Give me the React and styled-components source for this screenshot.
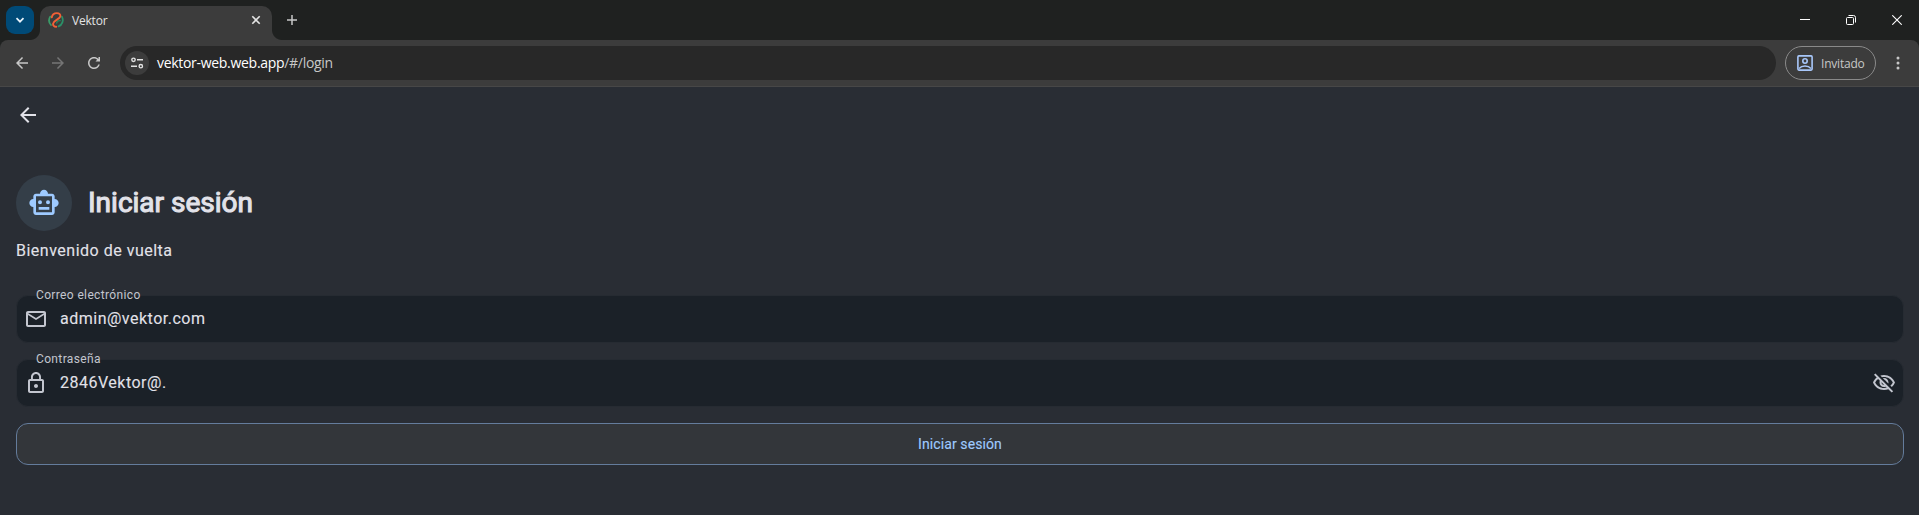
import React from "react";
import styled, { createGlobalStyle } from "styled-components";

const Global = createGlobalStyle`
  *{box-sizing:border-box}
  body{margin:0;background:#292d34;overflow:hidden}
  button{font:inherit;padding:0;border:0;background:none;color:inherit}
  svg{display:block;flex:none}
`;
const Window = styled.div`
  height:515px;display:flex;flex-direction:column;background:#292d34;
  font-family:Roboto,sans-serif;color:#e2e2e9;
`;
const TabStrip = styled.header`
  height:40px;display:flex;align-items:flex-start;padding:6px 0 0 6px;background:#1f2120;
  font-family:"Open Sans","Noto Sans",sans-serif;
`;
const TabSearch = styled.button`
  width:28px;height:28px;border-radius:9px;background:#004a77;display:grid;place-items:center;margin-right:6px;
`;
const Tab = styled.div`
  position:relative;width:232px;height:34px;border-radius:10px 10px 0 0;background:#3c3c3c;
  display:flex;align-items:center;padding:0 10px 6px 8px;color:#e3e3e3;
  &::before,&::after{content:"";position:absolute;bottom:0;width:10px;height:10px}
  &::before{left:-10px;background:radial-gradient(circle at 0 0,transparent 9.5px,#3c3c3c 10.5px)}
  &::after{right:-10px;background:radial-gradient(circle at 100% 0,transparent 9.5px,#3c3c3c 10.5px)}
`;
const TabTitle = styled.span`
  flex:1;margin-left:8px;padding-top:1px;font-size:12px;line-height:16px;letter-spacing:-0.2px;
`;
const NewTab = styled.button`
  width:28px;height:28px;margin-left:6px;display:grid;place-items:center;
`;
const WindowControls = styled.div`
  margin:0 -1px 0 auto;height:28px;display:flex;
`;
const ControlButton = styled.button`
  width:46px;height:28px;display:grid;place-items:center;
`;
const Chrome = styled.div`background:#1f2120;flex:none;`;
const Toolbar = styled.div`
  height:47px;display:flex;align-items:center;padding:6px 8px;
  background:#3c3c3c;border-bottom:1px solid #474747;
  border-radius:8px 8px 0 0;font-family:"Open Sans","Noto Sans",sans-serif;
`;
const NavButton = styled.button`
  width:28px;height:28px;margin-right:8px;display:grid;place-items:center;
`;
const AddressBar = styled.div`
  flex:1;height:34px;margin-left:4px;border-radius:17px;background:#282828;display:flex;align-items:center;padding-left:5px;
`;
const SiteInfo = styled.span`
  width:24px;height:24px;border-radius:50%;background:#3c3c3c;display:grid;place-items:center;margin-right:8px;
`;
const Url = styled.span`
  font-size:14px;line-height:20px;letter-spacing:-0.3px;color:#fff;white-space:pre;
`;
const Path = styled.span`color:#c7c7c7;`;
const Profile = styled.button`
  width:91px;height:34px;margin-left:9px;border:1px solid #8a8a8a;border-radius:17px;
  display:flex;align-items:center;padding-left:11px;gap:8px;color:#c7c7c7;font-size:12px;letter-spacing:-0.2px;
`;
const MenuButton = styled.button`
  width:28px;height:28px;margin:0 -1px 0 8px;display:grid;place-items:center;
`;
const Page = styled.main`
  flex:1;display:flex;flex-direction:column;padding:16px 15px 0 16px;
`;
const Back = styled.button`width:24px;height:24px;`;
const Heading = styled.div`
  display:flex;align-items:center;gap:16px;margin-top:48px;
`;
const Avatar = styled.div`
  width:56px;height:56px;border-radius:50%;background:#343e48;display:grid;place-items:center;
`;
const Title = styled.h1`
  margin:0;font-size:28px;line-height:36px;font-weight:400;letter-spacing:0;-webkit-text-stroke:1.1px currentColor;
`;
const Subtitle = styled.p`
  margin:8px 0 0;font-size:16px;line-height:24px;letter-spacing:0.5px;-webkit-text-stroke:0.12px currentColor;
`;
const Form = styled.form`display:flex;flex-direction:column;margin-top:32px;`;
const Field = styled.label`
  position:relative;height:48px;margin-bottom:16px;display:flex;align-items:center;
  border:1px solid #262b32;border-radius:12px;background:#1b2128;padding:0 7px;
`;
const FieldLabel = styled.span`
  position:absolute;left:19px;top:-9px;font-size:12px;line-height:16px;letter-spacing:0.36px;color:#c3c6cf;
`;
const Value = styled.span`
  flex:1;margin-left:12px;font-size:16px;line-height:24px;letter-spacing:0.5px;-webkit-text-stroke:0.1px currentColor;
`;
const Submit = styled.button`
  height:42px;border:1px solid #647c9c;border-radius:12px;background:#33363a;
  color:#9ecaff;font-size:14px;letter-spacing:0.1px;-webkit-text-stroke:0.12px currentColor;
`;

const paths = {
  back: "M20 11H7.83l5.59-5.59L12 4l-8 8 8 8 1.41-1.41L7.83 13H20v-2z",
  forward: "M4 11h12.17l-5.59-5.59L12 4l8 8-8 8-1.41-1.41L16.17 13H4v-2z",
  reload: "M17.65 6.35C16.2 4.9 14.21 4 12 4c-4.42 0-7.99 3.58-7.99 8s3.57 8 7.99 8c3.73 0 6.84-2.55 7.73-6h-2.08c-.82 2.33-3.04 4-5.65 4-3.31 0-6-2.69-6-6s2.69-6 6-6c1.66 0 3.14.69 4.22 1.78L14 10h6V4h-2v2.7z",
  mail: "M22 6c0-1.1-.9-2-2-2H4c-1.1 0-2 .9-2 2v12c0 1.1.9 2 2 2h16c1.1 0 2-.9 2-2V6zm-2 0l-8 5-8-5h16zm0 12H4V8l8 5 8-5v10z",
  lock: "M12 17c1.1 0 2-.9 2-2s-.9-2-2-2-2 .9-2 2 .9 2 2 2zm6-9h-1V6c0-2.76-2.24-5-5-5S7 3.24 7 6v2H6c-1.1 0-2 .9-2 2v10c0 1.1.9 2 2 2h12c1.1 0 2-.9 2-2V10c0-1.1-.9-2-2-2zM8.9 6c0-1.71 1.39-3.1 3.1-3.1s3.1 1.39 3.1 3.1v2H8.9V6zM18 20H6V10h12v10z",
  hidden: "M12 6c3.79 0 7.17 2.13 8.82 5.5-.59 1.22-1.42 2.27-2.41 3.12l1.41 1.41c1.39-1.23 2.49-2.77 3.18-4.53C21.27 7.11 17 4 12 4c-1.27 0-2.49.2-3.64.57l1.65 1.65C10.66 6.09 11.32 6 12 6zm-1.07 1.14L13 9.21c.57.25 1.03.71 1.28 1.28l2.07 2.07c.08-.34.14-.7.14-1.07C16.5 9.01 14.48 7 12 7c-.37 0-.72.05-1.07.14zM2.01 3.87l2.68 2.68C3.06 7.83 1.77 9.53 1 11.5 2.73 15.89 7 19 12 19c1.52 0 2.98-.29 4.32-.82l3.42 3.42 1.41-1.41L3.42 2.45 2.01 3.87zm7.5 7.5l2.61 2.61c-.04.01-.08.02-.12.02-1.38 0-2.5-1.12-2.5-2.5 0-.05.01-.08.01-.13zm-3.4-3.4l1.75 1.75c-.23.55-.36 1.15-.36 1.78 0 2.48 2.02 4.5 4.5 4.5.63 0 1.23-.13 1.77-.36l.98.98c-.88.24-1.8.38-2.75.38-3.79 0-7.17-2.13-8.82-5.5.7-1.43 1.72-2.61 2.93-3.53z",
  robot: "M20 9V7c0-1.1-.9-2-2-2h-3c0-1.66-1.34-3-3-3S9 3.34 9 5H6c-1.1 0-2 .9-2 2v2c-1.66 0-3 1.34-3 3s1.34 3 3 3v4c0 1.1.9 2 2 2h12c1.1 0 2-.9 2-2v-4c1.66 0 3-1.34 3-3s-1.34-3-3-3zm-2 10H6V7h12v12zM9 10a1.5 1.5 0 1 0 0 3 1.5 1.5 0 0 0 0-3zm6 0a1.5 1.5 0 1 0 0 3 1.5 1.5 0 0 0 0-3zM8 15h8v2H8z",
};
const Icon = ({ name, size = 24, color = "#c3c6cf" }) => (
  <svg width={size} height={size} viewBox="0 0 24 24" fill={color}><path d={paths[name]} /></svg>
);
const Favicon = () => (
  <svg width="16" height="16" viewBox="0 0 16 16" fill="none" strokeLinecap="round">
    <path d="M2.200 4.600A7 7 0 0 0 3 13" stroke="#3b9a68" strokeWidth="1.800" />
    <path d="M14 4.800A7 7 0 0 1 10.600 14.400" stroke="#2b9068" strokeWidth="1.800" />
    <path d="M8.600 11c.6-1.900 2.600-2.900 3.700-2.400" stroke="#23805c" strokeWidth="1.400" />
    <path d="M3.800 5.400C4.200 2.900 6.200 1.100 8.800 1.100c2.600 0 4 1.500 3.500 3.500C11.600 7.300 5.700 8.300 5.100 11.600c-.3 1.900 1.100 3.200 3.100 3.200" stroke="#f26036" strokeWidth="1.900" />
  </svg>
);

export default function App() {
  return (
    <Window>
      <Global />
      <TabStrip>
        <TabSearch aria-label="Buscar pestañas">
          <svg width="10" height="10" viewBox="0 0 10 10" fill="none" stroke="#e8f3fb" strokeWidth="1.7"><path d="M1.500 3.200 5 6.700l3.500-3.500" /></svg>
        </TabSearch>
        <Tab>
          <Favicon />
          <TabTitle>Vektor</TabTitle>
          <svg width="12" height="12" viewBox="0 0 12 12" stroke="#e3e3e3" strokeWidth="1.600"><path d="m2.300 2.300 7.400 7.400M9.700 2.300 2.300 9.700" /></svg>
        </Tab>
        <NewTab aria-label="Nueva pestaña">
          <svg width="12" height="12" viewBox="0 0 12 12" stroke="#c7c7c7" strokeWidth="1.500"><path d="M6 1v10M1 6h10" /></svg>
        </NewTab>
        <WindowControls>
          <ControlButton aria-label="Minimizar"><svg width="10" height="10" stroke="#fff"><path d="M0 4.500h10" /></svg></ControlButton>
          <ControlButton aria-label="Restaurar"><svg width="10" height="10" viewBox="0 0 10 10" fill="none" stroke="#fff"><rect x=".5" y="2.500" width="7" height="7" rx="1" /><path d="M2.500.5h5a2 2 0 0 1 2 2v5" /></svg></ControlButton>
          <ControlButton aria-label="Cerrar"><svg width="10" height="10" viewBox="0 0 10 10" stroke="#fff" strokeWidth="1.100"><path d="m.3.3 9.400 9.400M9.700.3.3 9.700" /></svg></ControlButton>
        </WindowControls>
      </TabStrip>
      <Chrome>
        <Toolbar>
          <NavButton aria-label="Atrás"><Icon name="back" size={18} color="#c7c7c7" /></NavButton>
          <NavButton aria-label="Adelante"><Icon name="forward" size={18} color="#757575" /></NavButton>
          <NavButton aria-label="Recargar"><Icon name="reload" size={18} color="#c7c7c7" /></NavButton>
          <AddressBar>
            <SiteInfo>
              <svg width="14" height="14" viewBox="0 0 14 14" fill="none" stroke="#e3e3e3" strokeWidth="1.400"><circle cx="3.500" cy="3.800" r="1.700" /><path d="M7 3.800h6M1 10.200h6" /><circle cx="10.800" cy="10.200" r="1.700" /></svg>
            </SiteInfo>
            <Url>vektor-web.web.app<Path>/#/login</Path></Url>
          </AddressBar>
          <Profile>
            <svg width="16" height="16" viewBox="0 0 16 16" fill="none" stroke="#a8c7fa" strokeWidth="1.600"><rect x=".9" y=".9" width="14.200" height="14.200" rx="1" /><circle cx="8" cy="6" r="2.200" /><path d="M2 13.500c3-3.300 9-3.300 12 0" /></svg>
            Invitado
          </Profile>
          <MenuButton aria-label="Menú">
            <svg width="4" height="16" viewBox="0 0 4 16" fill="#c7c7c7"><circle cx="2" cy="3" r="1.500" /><circle cx="2" cy="8" r="1.500" /><circle cx="2" cy="13" r="1.500" /></svg>
          </MenuButton>
        </Toolbar>
      </Chrome>
      <Page>
        <Back aria-label="Volver"><Icon name="back" color="#e2e2e9" /></Back>
        <Heading>
          <Avatar><Icon name="robot" size={32} color="#9ecaff" /></Avatar>
          <Title>Iniciar sesión</Title>
        </Heading>
        <Subtitle>Bienvenido de vuelta</Subtitle>
        <Form>
          <Field>
            <FieldLabel>Correo electrónico</FieldLabel>
            <Icon name="mail" />
            <Value>admin@vektor.com</Value>
          </Field>
          <Field>
            <FieldLabel>Contraseña</FieldLabel>
            <Icon name="lock" />
            <Value>2846Vektor@.</Value>
            <Icon name="hidden" />
          </Field>
          <Submit type="button">Iniciar sesión</Submit>
        </Form>
      </Page>
    </Window>
  );
}
